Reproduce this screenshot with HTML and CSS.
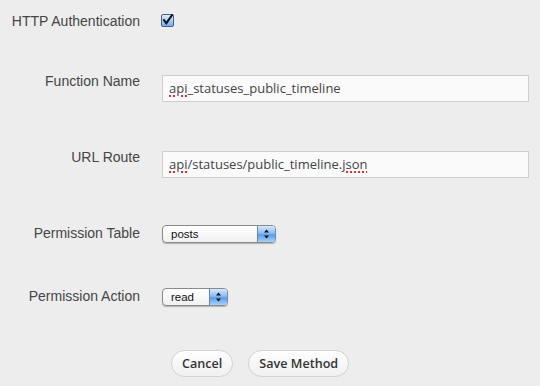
FILE: index.html
```html
<!DOCTYPE html>
<html lang="en">
<head>
    <meta charset="UTF-8">
    <title>Edit Method</title>
    <link rel="stylesheet" href="styles.css">
</head>
<body>
    <form class="method-form">
        <div class="field field-check">
            <label class="field-label">HTTP Authentication</label>
            <div class="field-control">
                <span class="checkbox">
                    <svg width="13" height="13" viewBox="0 0 13 13">
                        <defs>
                            <linearGradient id="cbFill" x1="0" y1="0" x2="0" y2="1">
                                <stop offset="0" stop-color="#e4f1fd"/>
                                <stop offset="0.5" stop-color="#a9d0f5"/>
                                <stop offset="1" stop-color="#6eaaea"/>
                            </linearGradient>
                        </defs>
                        <rect x="0.5" y="0.5" width="12" height="12" rx="1.5" fill="url(#cbFill)" stroke="#3f5f8e"/>
                        <path d="M3 6.2 L5.3 9.2 L11 1.2" fill="none" stroke="#111" stroke-width="2" stroke-linecap="square"/>
                    </svg>
                </span>
            </div>
        </div>

        <div class="field">
            <label class="field-label">Function Name</label>
            <div class="field-control">
                <div class="text-input"><span class="misspelled">api</span>_statuses_public_timeline</div>
            </div>
        </div>

        <div class="field">
            <label class="field-label">URL Route</label>
            <div class="field-control">
                <div class="text-input"><span class="misspelled">api</span>/statuses/public_timeline.<span class="misspelled">json</span></div>
            </div>
        </div>

        <div class="field field-select">
            <label class="field-label">Permission Table</label>
            <div class="field-control">
                <div class="select select-wide">
                    <span class="select-value">posts</span>
                    <span class="select-arrow">
                        <svg width="7" height="10" viewBox="0 0 7 10">
                            <polygon points="3.5,0.5 6,3.5 1,3.5" fill="#111"/>
                            <polygon points="1,6.5 6,6.5 3.5,9.5" fill="#111"/>
                        </svg>
                    </span>
                </div>
            </div>
        </div>

        <div class="field field-select">
            <label class="field-label">Permission Action</label>
            <div class="field-control">
                <div class="select select-narrow">
                    <span class="select-value">read</span>
                    <span class="select-arrow">
                        <svg width="7" height="10" viewBox="0 0 7 10">
                            <polygon points="3.5,0.5 6,3.5 1,3.5" fill="#111"/>
                            <polygon points="1,6.5 6,6.5 3.5,9.5" fill="#111"/>
                        </svg>
                    </span>
                </div>
            </div>
        </div>

        <div class="actions">
            <button type="button" class="btn">Cancel</button>
            <button type="button" class="btn">Save Method</button>
        </div>
    </form>
</body>
</html>
```

FILE: styles.css
```css
* {
    margin: 0;
    padding: 0;
    box-sizing: border-box;
}

body {
    background-color: #ededed;
    font-family: 'Liberation Sans', Arial, sans-serif;
    color: #454545;
}

.method-form {
    padding: 12px 11px 0 0;
}

.field {
    display: flex;
    align-items: flex-start;
    margin-bottom: 46px;
}

.field-check {
    margin-bottom: 42px;
}

.field-select {
    margin-bottom: 44px;
}

.field-label {
    width: 140px;
    flex-shrink: 0;
    text-align: right;
    font-size: 14px;
    line-height: 18px;
}

.field-control {
    flex: 1;
    margin-left: 22px;
}

.checkbox {
    display: block;
    width: 13px;
    height: 13px;
    margin-top: 2px;
    margin-left: -1px;
}

.checkbox svg {
    display: block;
}

.text-input {
    margin-top: 3px;
    height: 27px;
    border: 1px solid #cecece;
    background-color: #fafafa;
    padding: 0 6px;
    font-family: 'Open Sans', sans-serif;
    font-size: 13px;
    line-height: 25px;
    color: #444;
    white-space: nowrap;
}

.misspelled {
    text-decoration: underline dotted #e0302a;
    text-decoration-thickness: 2px;
    text-underline-offset: 2px;
}

.select {
    margin-top: 1px;
    height: 18px;
    display: flex;
    align-items: stretch;
    border: 1px solid #8a8a8a;
    border-radius: 4px;
    background: linear-gradient(#ffffff, #f1f1f1);
    box-shadow: 0 1px 1px rgba(0, 0, 0, 0.25);
    overflow: hidden;
    color: #111;
    font-size: 11.5px;
}

.select-wide {
    width: 114px;
}

.select-narrow {
    width: 66px;
}

.select-value {
    flex: 1;
    padding-left: 8px;
    line-height: 16px;
}

.select-arrow {
    width: 18px;
    display: flex;
    align-items: center;
    justify-content: center;
    border-left: 1px solid #5d86bd;
    background: linear-gradient(#d7eafd, #86bdf4 45%, #5b9ce8 55%, #a8d2fa);
}

.select-arrow svg {
    display: block;
}

.actions {
    display: flex;
    gap: 15px;
    padding-left: 171px;
}

.btn {
    height: 27px;
    padding: 0 10px;
    border: 1px solid #d2d2d2;
    border-radius: 14px;
    background: linear-gradient(#fefefe, #f0f0f0);
    font-family: 'Open Sans', sans-serif;
    font-weight: 600;
    font-size: 12.6px;
    color: #333;
    cursor: pointer;
}

.btn:hover {
    background: linear-gradient(#ffffff, #e6e6e6);
}
```
